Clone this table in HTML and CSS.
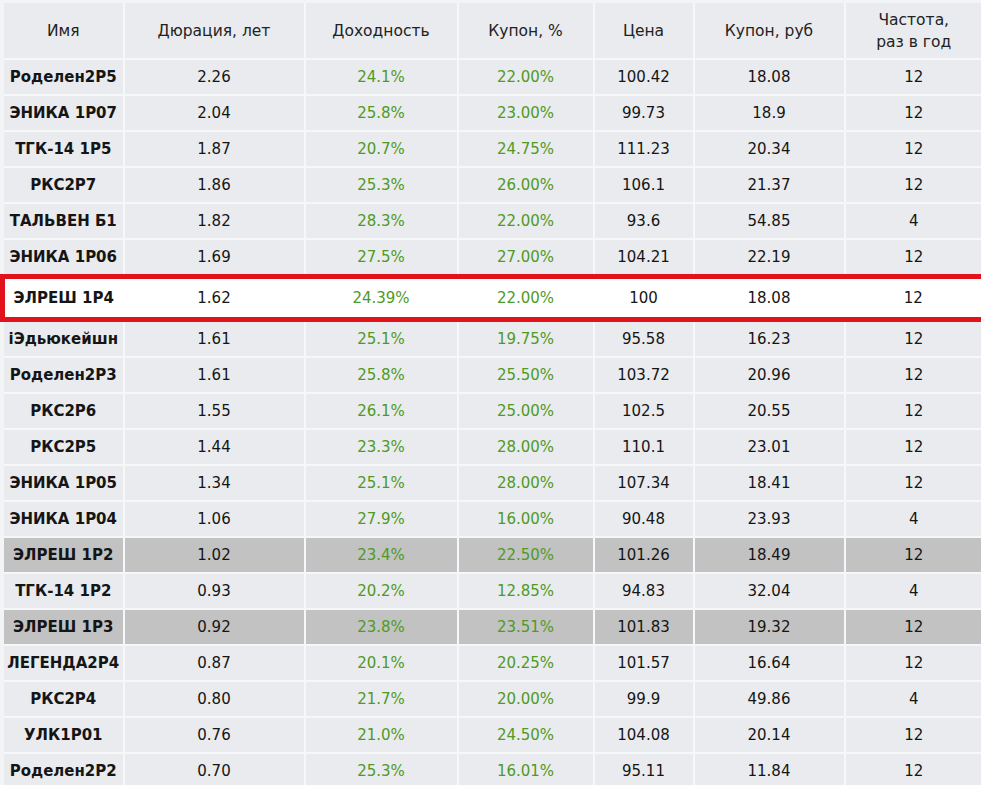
FILE: index.html
```html
<!DOCTYPE html>
<html lang="ru">
<head>
<meta charset="utf-8">
<title>Облигации</title>
<link rel="stylesheet" href="styles.css">
</head>
<body>
<table class="bonds">
  <colgroup>
    <col class="c-name"><col class="c-dur"><col class="c-yield"><col class="c-cpn"><col class="c-price"><col class="c-rub"><col class="c-freq">
  </colgroup>
  <thead>
    <tr><th>Имя</th><th>Дюрация, лет</th><th>Доходность</th><th>Купон, %</th><th>Цена</th><th>Купон, руб</th><th>Частота,<br>раз в год</th></tr>
  </thead>
  <tbody>
    <tr><td class="name">Роделен2Р5</td><td>2.26</td><td class="g">24.1%</td><td class="g">22.00%</td><td>100.42</td><td>18.08</td><td>12</td></tr>
    <tr><td class="name">ЭНИКА 1Р07</td><td>2.04</td><td class="g">25.8%</td><td class="g">23.00%</td><td>99.73</td><td>18.9</td><td>12</td></tr>
    <tr><td class="name">ТГК-14 1Р5</td><td>1.87</td><td class="g">20.7%</td><td class="g">24.75%</td><td>111.23</td><td>20.34</td><td>12</td></tr>
    <tr><td class="name">РКС2Р7</td><td>1.86</td><td class="g">25.3%</td><td class="g">26.00%</td><td>106.1</td><td>21.37</td><td>12</td></tr>
    <tr><td class="name">ТАЛЬВЕН Б1</td><td>1.82</td><td class="g">28.3%</td><td class="g">22.00%</td><td>93.6</td><td>54.85</td><td>4</td></tr>
    <tr><td class="name">ЭНИКА 1Р06</td><td>1.69</td><td class="g">27.5%</td><td class="g">27.00%</td><td>104.21</td><td>22.19</td><td>12</td></tr>
    <tr class="hl"><td class="name">ЭЛРЕШ 1Р4</td><td>1.62</td><td class="g">24.39%</td><td class="g">22.00%</td><td>100</td><td>18.08</td><td>12</td></tr>
    <tr><td class="name">iЭдьюкейшн</td><td>1.61</td><td class="g">25.1%</td><td class="g">19.75%</td><td>95.58</td><td>16.23</td><td>12</td></tr>
    <tr><td class="name">Роделен2Р3</td><td>1.61</td><td class="g">25.8%</td><td class="g">25.50%</td><td>103.72</td><td>20.96</td><td>12</td></tr>
    <tr><td class="name">РКС2Р6</td><td>1.55</td><td class="g">26.1%</td><td class="g">25.00%</td><td>102.5</td><td>20.55</td><td>12</td></tr>
    <tr><td class="name">РКС2Р5</td><td>1.44</td><td class="g">23.3%</td><td class="g">28.00%</td><td>110.1</td><td>23.01</td><td>12</td></tr>
    <tr><td class="name">ЭНИКА 1Р05</td><td>1.34</td><td class="g">25.1%</td><td class="g">28.00%</td><td>107.34</td><td>18.41</td><td>12</td></tr>
    <tr><td class="name">ЭНИКА 1Р04</td><td>1.06</td><td class="g">27.9%</td><td class="g">16.00%</td><td>90.48</td><td>23.93</td><td>4</td></tr>
    <tr class="gray"><td class="name">ЭЛРЕШ 1Р2</td><td>1.02</td><td class="g">23.4%</td><td class="g">22.50%</td><td>101.26</td><td>18.49</td><td>12</td></tr>
    <tr><td class="name">ТГК-14 1Р2</td><td>0.93</td><td class="g">20.2%</td><td class="g">12.85%</td><td>94.83</td><td>32.04</td><td>4</td></tr>
    <tr class="gray"><td class="name">ЭЛРЕШ 1Р3</td><td>0.92</td><td class="g">23.8%</td><td class="g">23.51%</td><td>101.83</td><td>19.32</td><td>12</td></tr>
    <tr><td class="name">ЛЕГЕНДА2Р4</td><td>0.87</td><td class="g">20.1%</td><td class="g">20.25%</td><td>101.57</td><td>16.64</td><td>12</td></tr>
    <tr><td class="name">РКС2Р4</td><td>0.80</td><td class="g">21.7%</td><td class="g">20.00%</td><td>99.9</td><td>49.86</td><td>4</td></tr>
    <tr><td class="name">УЛК1Р01</td><td>0.76</td><td class="g">21.0%</td><td class="g">24.50%</td><td>104.08</td><td>20.14</td><td>12</td></tr>
    <tr><td class="name">Роделен2Р2</td><td>0.70</td><td class="g">25.3%</td><td class="g">16.01%</td><td>95.11</td><td>11.84</td><td>12</td></tr>
  </tbody>
</table>
</body>
</html>
```

FILE: styles.css
```css
html, body {
  margin: 0;
  padding: 0;
  background: #f3f4f6;
}

.bonds {
  width: 981px;
  table-layout: fixed;
  border-collapse: collapse;
  font-family: "DejaVu Sans", Verdana, sans-serif;
  font-size: 15px;
  color: #151515;
  border: 3px solid #f3f4f6;
}

.c-name { width: 121px; }
.c-dur { width: 181px; }
.c-yield { width: 153px; }
.c-cpn { width: 136px; }
.c-price { width: 100px; }
.c-rub { width: 151px; }
.c-freq { width: 139px; }

.bonds th,
.bonds td {
  border: 2px solid #f6f7f9;
  background: #e9ebee;
  text-align: center;
  padding: 0;
  white-space: nowrap;
  overflow: hidden;
}

.bonds th {
  font-weight: normal;
  font-size: 15.5px;
  color: #222;
  height: 55px;
  line-height: 22px;
}

.bonds td {
  height: 34px;
}

.bonds td.name {
  font-weight: bold;
}

.bonds td.g {
  color: #4f9a25;
}

.bonds tr.gray td {
  background: #c2c2c2;
}

.bonds tr.hl td {
  background: #ffffff;
  border-color: #ffffff;
  border-top: 5px solid #e2121c;
  border-bottom: 5px solid #e2121c;
  height: 38px;
}

.bonds tr.hl td:first-child {
  border-left: 5px solid #e2121c;
}

.bonds tr.hl td:last-child {
  border-right: 5px solid #e2121c;
}
```
